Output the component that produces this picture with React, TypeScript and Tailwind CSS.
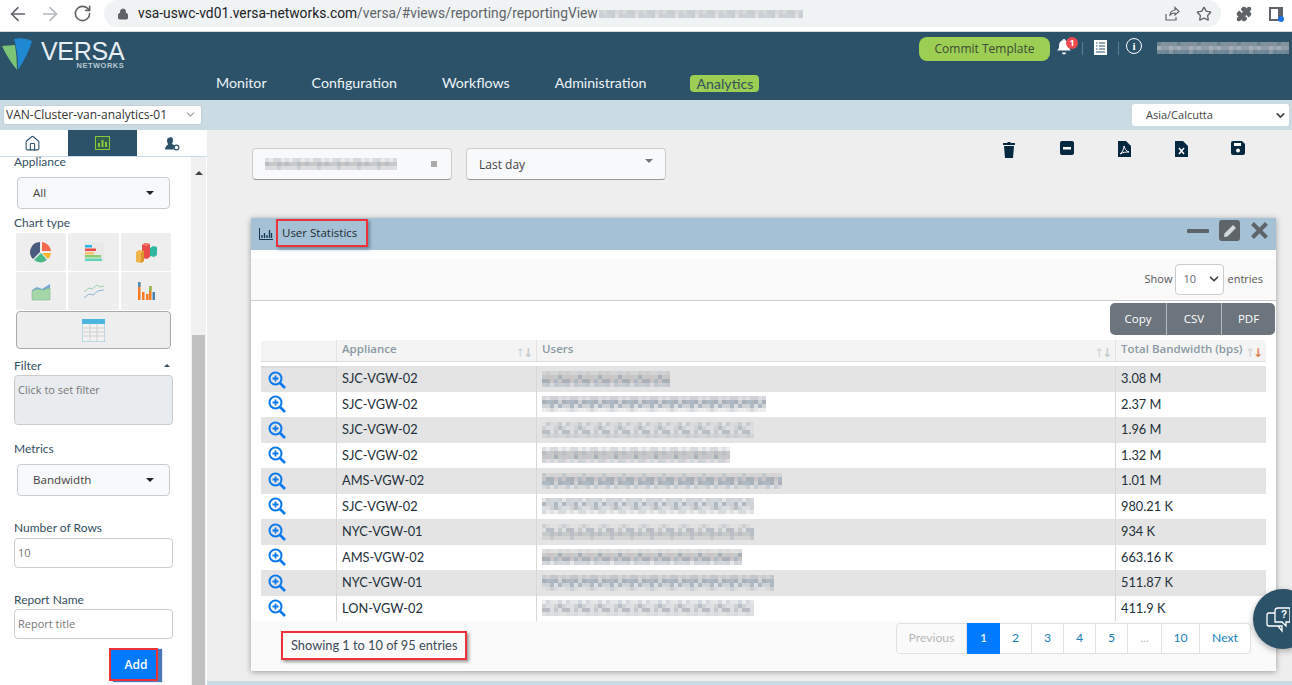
import { ArrowLeft, ArrowRight, RotateCw, Lock, Star, Puzzle, ChevronDown, Home } from 'lucide-react'

const lato = "font-['Lato',sans-serif]"
const open = "font-['Open_Sans',sans-serif]"

const rows = [
  ['SJC-VGW-02', '3.08 M', 130, 1],
  ['SJC-VGW-02', '2.37 M', 225, 2],
  ['SJC-VGW-02', '1.96 M', 215, 3],
  ['SJC-VGW-02', '1.32 M', 190, 4],
  ['AMS-VGW-02', '1.01 M', 240, 5],
  ['SJC-VGW-02', '980.21 K', 215, 6],
  ['NYC-VGW-01', '934 K', 215, 7],
  ['AMS-VGW-02', '663.16 K', 200, 8],
  ['NYC-VGW-01', '511.87 K', 235, 9],
  ['LON-VGW-02', '411.9 K', 215, 10],
] as const

const tints = ['#b9bec4', '#cfd3d6', '#a9b0b8', '#c6cbc9', '#dcdfe2', '#aeb9c4', '#c9c4c6']

// pixelated stand-in for the redacted text
function Blur({ width, seed, lines = 3, cell = 4, dark }: { width: number; seed: number; lines?: number; cell?: number; dark?: boolean }) {
  const cols = Math.floor(width / cell)
  return (
    <div className="flex flex-col" style={{ width }}>
      {Array.from({ length: lines }, (_, l) => (
        <div key={l} className="flex" style={{ opacity: (l === 0 || l === lines - 1) && lines > 1 ? 0.55 : dark ? 0.8 : 1 }}>
          {Array.from({ length: cols }, (_, i) => (
            <div key={i} style={{ width: cell, height: cell, background: tints[(i * 7 + seed * 13 + ((i + l) * (i + l)) % 5 + l * 3) % tints.length] }} />
          ))}
        </div>
      ))}
    </div>
  )
}

function Versa() {
  return (
    <div className="flex items-start">
      <svg width="34" height="36" viewBox="0 0 34 36" className="mt-[5px]">
        <path d="M2 9 L15 8 Q17 20 17 33 Q8 22 2 9z" fill="#7cc576" />
        <path d="M14 2 Q24 0 32 4 Q28 18 18 33 Q18 14 14 2z" fill="#1e88d2" />
      </svg>
      <div className="ml-[7px] mt-[8px] flex flex-col items-end">
        <span className="font-['Liberation_Sans',sans-serif] text-[25px] leading-[22px] text-[#e8eef2] tracking-[-0.3px]">VERSA</span>
        <span className="font-['Liberation_Sans',sans-serif] font-bold text-[7.500px] leading-[8px] tracking-[0.5px] text-[#b8c6cf]">NETWORKS</span>
      </div>
    </div>
  )
}

function BrowserBar() {
  return (
    <div className="h-[32px] pb-[4px] bg-white border-b border-[#d6d9dc] flex items-center">
      <ArrowLeft size={22} strokeWidth={1.700} className="ml-[7px] text-[#5f6368]" />
      <ArrowRight size={22} strokeWidth={1.700} className="ml-[10px] text-[#b3b6b9]" />
      <RotateCw size={19} strokeWidth={2} className="ml-[12px] text-[#5f6368]" />
      <div className="ml-[12px] w-[1117px] h-[27px] rounded-r-full rounded-l-full bg-[#f0f3f4] flex items-center">
        <Lock size={12} className="ml-[13px] text-[#5f6368]" fill="#5f6368" />
        <span className="ml-[9px] text-[13.800px] text-[#202124] font-['Roboto',sans-serif] whitespace-nowrap">
          vsa-uswc-vd01.versa-networks.com<span className="text-[#5f6368]">/versa/#views/reporting/reportingView</span>
        </span>
        <div className="ml-[1px]"><Blur width={205} seed={2} lines={2} /></div>
        <div className="flex-1" />
        <svg width="16" height="16" viewBox="0 0 16 16" fill="none" stroke="#5f6368" strokeWidth="1.200" className="mr-[16px]">
          <path d="M2 8v6h10v-3M6 9c0-3 3-5 5-5V1.500L15 5.500l-4 3.500V7C9 7 7 8 6 9z" />
        </svg>
        <Star size={16} strokeWidth={2} className="mr-[9px] text-[#5f6368]" />
      </div>
      <Puzzle size={16} fill="#5f6368" className="ml-[15px] text-[#5f6368]" />
      <div className="ml-[17px] relative w-[14px] h-[14px] border-[2px] border-[#5f6368] border-r-[5px]">
        <div className="absolute -right-[6px] -bottom-[3px] w-[6px] h-[6px] rounded-full bg-[#1a73e8]" />
      </div>
    </div>
  )
}

function Header() {
  return (
    <div className="h-[68px] bg-[#2b5269] relative flex flex-col">
      <div className="h-[40px] flex">
        <Versa />
        <div className="flex-1" />
        <div className="flex items-start pt-[5px]">
          <div className={`${open} h-[24px] w-[131px] rounded-[8px] bg-[#9bce52] text-[#3f4a3a] text-[12px] flex items-center justify-center`}>
            Commit Template
          </div>
          <div className="relative ml-[6px] mt-[1px]">
            <svg width="16" height="18" viewBox="0 0 16 18" fill="#fff"><path d="M8 1a1.300 1.300 0 0 1 1.300 1.300c2.600.6 3.600 2.700 3.600 5.200 0 3 1 4 2.100 5H1c1.100-1 2.100-2 2.100-5 0-2.500 1-4.600 3.600-5.200A1.300 1.300 0 0 1 8 1zM6 14.500h4a2 2 0 0 1-4 0z" /></svg>
            <div className={`absolute -top-[1px] left-[10px] w-[12px] h-[12px] rounded-full bg-[#ef4a4f] text-white text-[9px] font-bold flex items-center justify-center ${open}`}>1</div>
          </div>
          <div className="w-px h-[13px] bg-[#5d7d90] ml-[10px] mt-[5px]" />
          <svg width="13" height="15" viewBox="0 0 13 15" className="ml-[11px] mt-[3px]">
            <rect x="0" y="0" width="13" height="15" fill="#fff" />
            <path d="M2 3h1.500M5 3h6M2 6h1.500M5 6h6M2 9h1.500M5 9h6M2 12h9" stroke="#2b5269" strokeWidth="1.200" />
          </svg>
          <div className="w-px h-[13px] bg-[#5d7d90] ml-[11px] mt-[5px]" />
          <div className="ml-[7px] mt-[1px] w-[16px] h-[16px] rounded-full border-[1.500px] border-white text-white text-[11px] font-bold flex items-center justify-center font-['Liberation_Serif',serif]">i</div>
          <div className="ml-[15px] mt-[5px]"><Blur width={135} seed={5} lines={3} cell={4} dark /></div>
        </div>
      </div>
      <nav className={`${lato} flex items-center text-[14.200px] text-[#eef3f6] pl-[216px] h-[24px] -mt-[1px]`}>
        <span>Monitor</span>
        <span className="ml-[45px]">Configuration</span>
        <span className="ml-[45px]">Workflows</span>
        <span className="ml-[45px]">Administration</span>
        <span className="ml-[44px] bg-[#9bce52] text-[#33505f] px-[6px] rounded-[4px] leading-[17px] h-[17px]">Analytics</span>
      </nav>
    </div>
  )
}

function SubBar() {
  return (
    <div className="h-[30px] bg-[#cbdbe4] flex items-center justify-between pr-[3px] pl-[3px]">
      <div className={`${open} w-[199px] h-[20px] -mt-[1px] rounded-[3px] bg-white border border-[#c3d0d8] text-[12px] text-[#333] flex items-center pl-[2px] justify-between pr-[4px]`}>
        VAN-Cluster-van-analytics-01
        <ChevronDown size={13} className="text-[#9aa3a8]" />
      </div>
      <div className={`${open} w-[157px] h-[22px] rounded-[3px] bg-white text-[11px] text-[#444] flex items-center pl-[14px] justify-between pr-[2px]`}>
        Asia/Calcutta
        <ChevronDown size={13} strokeWidth={3} className="text-[#444]" />
      </div>
    </div>
  )
}

function Select({ label, className }: { label: string; className?: string }) {
  return (
    <div className={`${open} ml-[17px] w-[153px] h-[32px] rounded-[4px] bg-[#f8f9fa] border border-[#c9ccce] text-[11.600px] text-[#444] flex items-center justify-between pl-[15px] pr-[15px] ${className ?? ''}`}>
      {label}
      <div className="w-0 h-0 border-x-[4px] border-x-transparent border-t-[4px] border-t-[#222]" />
    </div>
  )
}

function ChartCell({ children, w }: { children: React.ReactNode; w: string }) {
  return <div className={`${w} h-[38px] bg-[#eeeeee] rounded-[2px] flex items-center justify-center`}>{children}</div>
}

function ChartGrid() {
  return (
    <div className="ml-[16px] w-[155px] flex flex-col gap-[1px]">
      <div className="flex gap-[2px]">
        <ChartCell w="w-[50px]">
          <svg width="22" height="22" viewBox="0 0 22 22">
            <path d="M10 1v10l-7 7A10 10 0 0 1 10 1z" fill="#4b5a7f" />
            <path d="M12 1a10 10 0 0 1 9 9h-9z" fill="#f4694f" />
            <path d="M21 12a10 10 0 0 1-3 6l-6-6z" fill="#f8b62d" />
            <path d="M4 19l7-7 6 7a10 10 0 0 1-13 0z" fill="#49b98a" />
          </svg>
        </ChartCell>
        <ChartCell w="w-[51px]">
          <svg width="20" height="20" viewBox="0 0 20 20">
            <rect x="0" y="0" width="20" height="20" fill="#e6e6e6" opacity=".6" />
            <rect x="1" y="3" width="7" height="2.500" fill="#2cb5e8" />
            <rect x="1" y="6.500" width="11" height="2.500" fill="#ea4b4b" />
            <rect x="1" y="10" width="9" height="2.500" fill="#f5c26b" />
            <rect x="1" y="13" width="16" height="2.500" fill="#8ccf6f" />
            <rect x="1" y="16.500" width="17" height="2.500" fill="#5dd6b5" />
          </svg>
        </ChartCell>
        <ChartCell w="w-[50px]">
          <svg width="21" height="21" viewBox="0 0 21 21">
            <path d="M14 6l3-2 4 1v8l-3 2-4-1z" fill="#2fb8a0" />
            <path d="M6 3l3-2 5 1v13l-3 2-5-1z" fill="#ea4b4b" />
            <path d="M6 3l3-2 5 1-3 2z" fill="#f47a6a" />
            <path d="M0 10l3-2 5 1v10l-3 2-5-1z" fill="#f0b54a" />
            <path d="M5 11l3-2v10l-3 2z" fill="#d9952e" />
          </svg>
        </ChartCell>
      </div>
      <div className="flex gap-[2px]">
        <ChartCell w="w-[50px]">
          <svg width="20" height="19" viewBox="0 0 20 19">
            <path d="M1 8l5-3 5 2 8-5v8H1z" fill="#6fa8dc" />
            <path d="M1 9l5-2 6 1 7-2v12H1z" fill="#a5d6a7" stroke="#7fb58a" strokeWidth=".6" />
          </svg>
        </ChartCell>
        <ChartCell w="w-[51px]">
          <svg width="22" height="18" viewBox="0 0 22 18" fill="none">
            <path d="M1 10l5-4 3 1 5-4 3 2 4-1" stroke="#9cd2b0" strokeWidth="1" />
            <path d="M1 16l5-4 4 1 5-4 6-1" stroke="#8db7da" strokeWidth="1" />
          </svg>
        </ChartCell>
        <ChartCell w="w-[50px]">
          <svg width="18" height="18" viewBox="0 0 18 18">
            <rect x="1" y="0" width="2.500" height="18" fill="#f47b20" />
            <rect x="1" y="0" width="2.500" height="5" fill="#4a90c2" />
            <rect x="5" y="10" width="2.500" height="8" fill="#f47b20" />
            <rect x="9" y="12" width="2.500" height="6" fill="#f47b20" />
            <rect x="12" y="4" width="2.500" height="14" fill="#f47b20" />
            <rect x="12" y="4" width="2.500" height="5" fill="#8dbb4f" />
            <rect x="15.500" y="10" width="2.500" height="8" fill="#3f87b5" />
          </svg>
        </ChartCell>
      </div>
      <div className="w-[155px] h-[38px] bg-[#eeeeee] border border-[#aaa] rounded-[4px] flex items-center justify-center">
        <svg width="23" height="23" viewBox="0 0 23 23">
          <rect width="23" height="23" fill="#f2f2f2" stroke="#7fc4dd" />
          <rect width="23" height="5" fill="#4db6de" />
          <path d="M0 9h23M0 13h23M0 17h23M8 5v18M15 5v18" stroke="#cfcfcf" strokeWidth="1" />
        </svg>
      </div>
    </div>
  )
}

function Sidebar() {
  const label = `${lato} text-[12px] leading-[14px] text-[#33505f]`
  const field = `${open} ml-[14px] w-[159px] rounded-[4px] border border-[#ccc] text-[11px] text-[#777]`
  return (
    <div className="w-[207px] shrink-0 bg-white flex flex-col">
      <div className="h-[27px] flex border-b border-[#cbdbe4]">
        <div className="w-[64px] flex items-center justify-center"><Home size={17} strokeWidth={1.500} className="text-[#2b5269]" /></div>
        <div className="w-[4px]" />
        <div className="w-[69px] bg-[#2b5269] flex items-center justify-center">
          <svg width="15" height="14" viewBox="0 0 15 14">
            <rect x=".5" y=".5" width="14" height="13" fill="#2f5f4f" stroke="#8cc63f" />
            <path d="M3 11V7h2v4zM6.500 11V4h2v7zM10 11V6h2v5z" fill="#8cc63f" />
          </svg>
        </div>
        <div className="flex-1 flex items-center justify-center">
          <svg width="15" height="15" viewBox="0 0 15 15">
            <path d="M5 1a3 3 0 0 1 3 3c0 2-1 3-1 4l2 1v1.500c-.5 2 0 3 0 3H0c0-3 2-4 3-5 0-1-1-2-1-4a3 3 0 0 1 3-3z" fill="#2b5269" />
            <circle cx="11.500" cy="11.500" r="2.300" fill="#fff" stroke="#2b5269" strokeWidth="1.200" />
          </svg>
        </div>
      </div>
      <div className="flex flex-1 min-h-0">
        <div className="w-[190px] shrink-0 flex flex-col">
          <div className={`${label} ml-[14px] -mt-[2px]`}>Appliance</div>
          <Select label="All" className="mt-[8px]" />
          <div className={`${label} ml-[14px] mt-[7px] mb-[3px]`}>Chart type</div>
          <ChartGrid />
          <div className={`${label} ml-[14px] mt-[10px] flex justify-between w-[156px]`}>
            Filter
            <div className="mt-[5px] w-0 h-0 border-x-[3px] border-x-transparent border-b-[3px] border-b-[#33505f]" />
          </div>
          <div className={`${field} h-[50px] mt-[2px] bg-[#e9ecef] pl-[3px] pt-[7px] leading-[14px]`}>Click to set filter</div>
          <div className={`${label} ml-[14px] mt-[17px]`}>Metrics</div>
          <Select label="Bandwidth" className="mt-[8px]" />
          <div className={`${label} ml-[14px] mt-[25px]`}>Number of Rows</div>
          <div className={`${field} h-[30px] mt-[3px] pl-[3px] flex items-center`}>10</div>
          <div className={`${label} ml-[14px] mt-[25px]`}>Report Name</div>
          <div className={`${field} h-[30px] mt-[2px] pl-[3px] flex items-center`}>Report title</div>
          <div className={`${open} ml-[109px] mt-[9px] w-[49px] h-[33px] border-[2px] border-[#ee3338] bg-[#007bff] text-white text-[12px] font-semibold flex items-center justify-center pl-[5px] shadow-[4px_1px_1px_#4a78b8]`}>
            Add
          </div>
        </div>
        <div className="w-[17px] bg-[#f1f1f1] border-x border-x-white flex flex-col">
          <div className="h-[20px] flex items-end justify-center pb-[2px]">
            <div className="w-0 h-0 border-x-[4px] border-x-transparent border-b-[4px] border-b-[#444]" />
          </div>
          <div className="flex-1" />
          <div className="h-[350px] mx-[1px] bg-[#c1c1c1]" />
        </div>
      </div>
    </div>
  )
}

function ZoomIcon() {
  return (
    <svg width="18" height="18" viewBox="0 0 18 18" fill="none" stroke="#0b79ee">
      <circle cx="7.500" cy="7.500" r="6" strokeWidth="2" />
      <path d="M12 12l5 5" strokeWidth="2.600" />
      <path d="M4.500 7.500h6M7.500 4.500v6" strokeWidth="1.800" />
    </svg>
  )
}

function Sort({ active }: { active?: boolean }) {
  return (
    <span className="absolute right-[5px] bottom-[2px] text-[12px] leading-[12px] tracking-[-2px] font-['DejaVu_Sans',sans-serif]">
      <span className="text-[#d5dbdd]">↑</span>
      <span className={active ? 'text-[#e0854a]' : 'text-[#c2c9cc]'}>↓</span>
    </span>
  )
}

function Table() {
  const cols = 'grid grid-cols-[75px_1px_199px_1px_578px_1px_150px]'
  const thCls = `${open} relative bg-[#f4f4f4] text-[11.500px] font-semibold text-[#8a9aa3] pl-[5px] h-[21px] leading-[17px]`
  return (
    <div className="ml-[10px] w-[1005px] mt-[5px]">
      <div className={cols}>
        <div className="bg-[#f4f4f4] mt-[1px]" />
        <div className="bg-[#e3e3e3]" />
        <div className={thCls}>Appliance<Sort /></div>
        <div className="bg-[#e3e3e3]" />
        <div className={thCls}>Users<Sort /></div>
        <div className="bg-[#e3e3e3]" />
        <div className={`${thCls} rounded-tr-[4px]`}>Total Bandwidth (bps)<Sort active /></div>
      </div>
      <div className="h-[5px] border-t border-[#ddd]" />
      {rows.map(([app, bw, w, seed], i) => (
        <div key={seed} className={`${cols} h-[25.500px] ${i % 2 === 0 ? 'bg-[#e4e4e4]' : 'bg-white'} ${lato} text-[12.800px] text-[#23303a]`}>
          <div className={`pl-[7px] flex items-center ${i === 0 ? 'border-t-2 border-[#dcdcdc]' : ''}`}><ZoomIcon /></div>
          <div className="bg-[#d8d8d8]" />
          <div className="pl-[5px] flex items-center">{app}</div>
          <div className="bg-[#d8d8d8]" />
          <div className="pl-[5px] flex items-center"><Blur width={w} seed={seed} lines={4} /></div>
          <div className="bg-[#d8d8d8]" />
          <div className="pl-[5px] flex items-center">{bw}</div>
        </div>
      ))}
    </div>
  )
}

function Pager() {
  const cell = 'h-[29px] flex items-center justify-center border-r border-[#e1e1e1] text-[#1580b8]'
  return (
    <div className={`${lato} flex items-stretch text-[12.200px] border border-[#e1e1e1] rounded-[4px] h-[31px] bg-white`}>
      <div className={`${cell} w-[70px] text-[#b8b8b8] bg-[#fafafa] rounded-l-[4px]`}>Previous</div>
      <div className="w-[33px] -my-[1px] h-[31px] bg-[#007bff] text-white flex items-center justify-center">1</div>
      {['2', '3', '4', '5'].map(p => (
        <div key={p} className={`${cell} w-[32px]`}>{p}</div>
      ))}
      <div className={`${cell} w-[34px] text-[#b8b8b8]`}>...</div>
      <div className={`${cell} w-[38px]`}>10</div>
      <div className="w-[50px] flex items-center justify-center text-[#1580b8]">Next</div>
    </div>
  )
}

function Panel() {
  return (
    <div className="ml-[44px] mt-[37px] w-[1025px] h-[453px] bg-white shadow-[0_1px_6px_rgba(0,0,0,0.35)] flex flex-col">
      <div className={`h-[32px] bg-[#a4c1d6] flex items-center shrink-0 ${open}`}>
        <svg width="14" height="12" viewBox="0 0 14 12" className="ml-[8px]" fill="none" stroke="#12364d">
          <path d="M.5 0v11.500H14" strokeWidth="1" />
          <path d="M3 10V7M5.500 10V5M8 10V7M10.500 10V2M12.500 10V5" strokeWidth="1.300" />
        </svg>
        <div className="ml-[3px] w-[92px] h-[28px] -mt-[2px] border-[2px] border-[#ee3338] shadow-[2px_2px_3px_#6f8797] text-[11.500px] text-[#1e2b33] flex items-center pl-[4px] whitespace-nowrap">
          User Statistics
        </div>
        <div className="flex-1" />
        <div className="flex items-center -mt-[7px] mr-[8px]">
          <div className="w-[22px] h-[4px] rounded-[1px] bg-[#5f6468]" />
          <div className="ml-[10px] w-[21px] h-[21px] bg-[#5f6468] rounded-[3px] flex items-center justify-center">
            <svg width="14" height="14" viewBox="0 0 14 14" fill="#cfd9df"><path d="M10 1l3 3-8.500 8.500L1 13l.5-3.500z" /></svg>
          </div>
          <svg width="17" height="17" viewBox="0 0 17 17" className="ml-[11px]" fill="none" stroke="#5f6468" strokeWidth="4">
            <path d="M1.500 1.500l14 14M15.500 1.500l-14 14" />
          </svg>
        </div>
      </div>
      <div className="h-[8px] shrink-0" />
      <div className={`${open} h-[43px] shrink-0 bg-[#fafafa] border-b border-[#ccc] flex items-center justify-end pr-[13px] text-[11px] text-[#555]`}>
        Show
        <div className="mx-[3px] w-[49px] h-[31px] rounded-[4px] border border-[#ccc] bg-white flex items-center justify-between pl-[7px] pr-[2px] text-[#667]">
          10
          <ChevronDown size={14} strokeWidth={3} className="text-[#444]" />
        </div>
        entries
      </div>
      <div className={`${open} self-end mr-[1px] mt-[2px] flex h-[32px] w-[165px] rounded-[5px] bg-[#6c757d] text-white text-[11.500px] font-medium shrink-0`}>
        <div className="w-[57px] flex items-center justify-center border-r border-[#b3b9bd]">Copy</div>
        <div className="w-[55px] flex items-center justify-center border-r border-[#b3b9bd]">CSV</div>
        <div className="flex-1 flex items-center justify-center">PDF</div>
      </div>
      <Table />
      <div className="flex-1 bg-[#fafafa] flex items-start justify-between pr-[25px] pl-[30px]">
        <div className={`${lato} mt-[10px] w-[186px] h-[29px] border-[2px] border-[#ee3338] shadow-[2px_2px_3px_#999] text-[12.800px] text-[#3a4a55] flex items-center pl-[8px] whitespace-nowrap`}>
          Showing 1 to 10 of 95 entries
        </div>
        <div className="mt-[2px]"><Pager /></div>
      </div>
    </div>
  )
}

function Content() {
  const icon = '#04283f'
  return (
    <div className="flex-1 bg-[#eeeeee] relative flex flex-col overflow-hidden pb-[4px]">
      <div className="flex mt-[18px] ml-[45px] h-[33px]">
        <div className="w-[200px] h-[32px] bg-[#f8f9fa] border border-[#ccc] border-b-[#999] rounded-[4px] flex items-center justify-between pl-[12px] pr-[14px]">
          <Blur width={132} seed={11} lines={3} />
          <div className="w-[6px] h-[6px] bg-[#aaa]" />
        </div>
        <div className={`${open} ml-[14px] w-[200px] h-[32px] pt-[1px] bg-[#f8f9fa] border border-[#ccc] border-b-[#999] rounded-[4px] text-[12px] text-[#444] flex items-center justify-between pl-[12px] pr-[12px]`}>
          Last day
          <div className="w-0 h-0 -mt-[8px] border-x-[4px] border-x-transparent border-t-[4px] border-t-[#777]" />
        </div>
        <div className="flex-1" />
        <div className="flex items-start gap-[44px] mr-[47px] -mt-[7px]">
          <svg width="14" height="17" viewBox="0 0 14 17" fill={icon}><path d="M1 2h4l1-1h2l1 1h4v2H1zM2 5h10l-1 12H3z" /></svg>
          <svg width="14" height="14" viewBox="0 0 14 14"><rect width="14" height="14" rx="2" fill={icon} /><rect x="3" y="6" width="8" height="2.500" fill="#fff" /></svg>
          <svg width="13" height="16" viewBox="0 0 13 16" fill={icon}><path d="M0 0h8l5 5v11H0z" /><path d="M2 13c3-2 4-6 4-8 1 3 2 5 5 6-3 0-6 0-9 2z" fill="none" stroke="#fff" strokeWidth="1" /></svg>
          <svg width="13" height="16" viewBox="0 0 13 16" fill={icon}><path d="M0 0h8l5 5v11H0z" /><path d="M4 7l5 6M9 7l-5 6" stroke="#fff" strokeWidth="1.500" /></svg>
          <svg width="14" height="14" viewBox="0 0 14 14" fill={icon} className="-ml-[1px]"><path d="M0 2a2 2 0 0 1 2-2h9l3 3v9a2 2 0 0 1-2 2H2a2 2 0 0 1-2-2z" /><rect x="3" y="2" width="7" height="3" fill="#fff" /><circle cx="7" cy="9.500" r="2" fill="#fff" /></svg>
        </div>
      </div>
      <Panel />
      <div className="absolute left-0 right-0 bottom-0 h-[4px] bg-[#cbdbe4]" />
      <div className="absolute -right-[21px] top-[459px] w-[60px] h-[60px] rounded-full bg-[#2b5269] shadow-[0_2px_6px_rgba(0,0,0,0.3)] flex items-center pl-[13px]">
        <svg width="24" height="28" viewBox="0 0 24 28" fill="none" stroke="#fff" strokeWidth="1.300">
          <path d="M10 8H3a2 2 0 0 0-2 2v9a2 2 0 0 0 2 2h13v5l-4-5" />
          <path d="M9 6a3 3 0 0 1 3-3h12v14l-4 0v4l-4-4h-7z" fill="#2b5269" />
          <text x="15" y="13" fontSize="10" fontWeight="700" fill="#fff" stroke="none" fontFamily="Liberation Sans">?</text>
        </svg>
      </div>
    </div>
  )
}

export default function App() {
  return (
    <div className="w-[1292px] h-[685px] overflow-hidden flex flex-col bg-white">
      <BrowserBar />
      <Header />
      <SubBar />
      <div className="flex flex-1 min-h-0">
        <Sidebar />
        <Content />
      </div>
    </div>
  )
}
